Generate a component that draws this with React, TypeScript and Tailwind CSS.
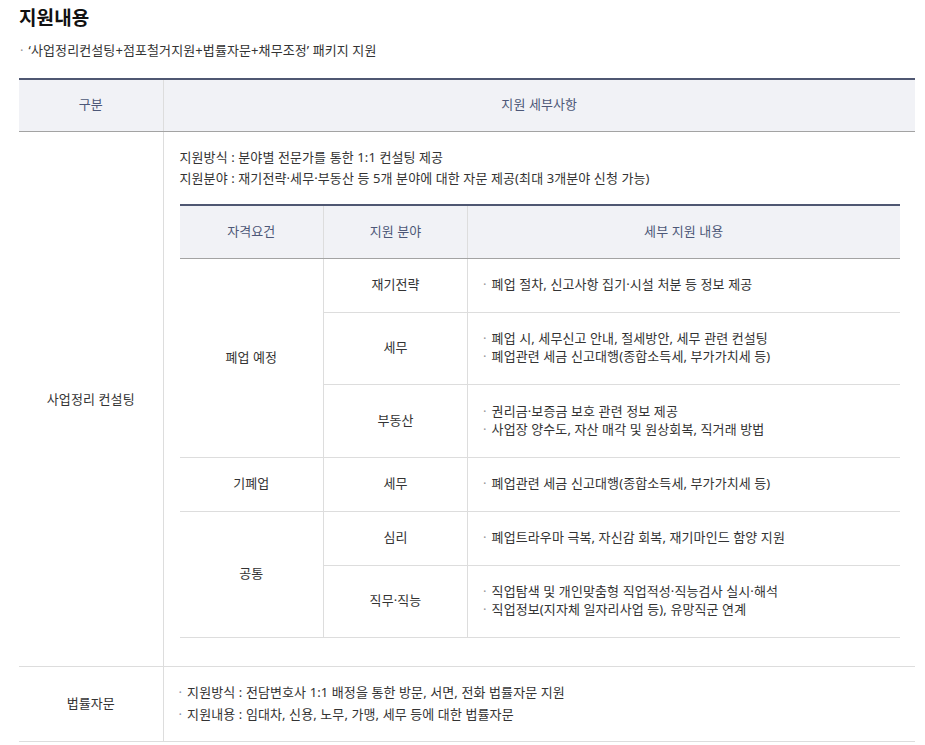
const font = { fontFamily: '"Noto Sans", "Noto Sans CJK KR", sans-serif' }

const Bullet = ({ children, dot = 'text-[#999]' }: { children: React.ReactNode; dot?: string }) => (
  <li className="flex">
    <span className={`mr-[5px] ${dot}`}>·</span>
    <span>{children}</span>
  </li>
)

type Row = { group?: string; span?: number; field: string; items: string[]; h: string }

const rows: Row[] = [
  { group: '폐업 예정', span: 3, field: '재기전략', h: 'h-[54px]', items: ['폐업 절차, 신고사항 집기·시설 처분 등 정보 제공'] },
  { field: '세무', h: 'h-[72px]', items: ['폐업 시, 세무신고 안내, 절세방안, 세무 관련 컨설팅', '폐업관련 세금 신고대행(종합소득세, 부가가치세 등)'] },
  { field: '부동산', h: 'h-[73px]', items: ['권리금·보증금 보호 관련 정보 제공', '사업장 양수도, 자산 매각 및 원상회복, 직거래 방법'] },
  { group: '기폐업', span: 1, field: '세무', h: 'h-[54px]', items: ['폐업관련 세금 신고대행(종합소득세, 부가가치세 등)'] },
  { group: '공통', span: 2, field: '심리', h: 'h-[54px]', items: ['폐업트라우마 극복, 자신감 회복, 재기마인드 함양 지원'] },
  { field: '직무·직능', h: 'h-[72px]', items: ['직업탐색 및 개인맞춤형 직업적성·직능검사 실시·해석', '직업정보(지자체 일자리사업 등), 유망직군 연계'] },
]

export default function App() {
  return (
    <div className="bg-white text-[13px] leading-[18px] tracking-[0.1px] text-[#333]" style={font}>
      <div className="pl-[19px] pt-[6px]">
        <h2 className="text-[19px] font-bold leading-[24px] text-[#111]">지원내용</h2>
        <p className="mt-[11px] flex">
          <span className="ml-[1px] mr-[5px] text-[#999]">·</span>
          ‘사업정리컨설팅+점포철거지원+법률자문+채무조정’ 패키지 지원
        </p>
      </div>

      <table className="ml-[19px] mt-[19px] w-[896px] table-fixed border-collapse">
        <colgroup>
          <col className="w-[144px]" />
          <col />
        </colgroup>
        <thead>
          <tr className="h-[52px] border-t-2 border-[#4f5772] bg-[#f1f2f6] text-[#4d5878]">
            <th className="border-b border-[#a3a3a3] pb-[2px] font-normal">구분</th>
            <th className="border-b border-l border-[#a3a3a3] border-l-[#ddd] pb-[2px] font-normal">지원 세부사항</th>
          </tr>
        </thead>
        <tbody>
          <tr className="border-b border-[#ddd]">
            <td className="text-center">사업정리 컨설팅</td>
            <td className="border-l border-[#ddd] pb-[28px] pl-[16px] pr-[16px] pt-[15px]">
              <p className="leading-[21px]">지원방식 : 분야별 전문가를 통한 1:1 컨설팅 제공</p>
              <p className="leading-[21px]">지원분야 : 재기전략·세무·부동산 등 5개 분야에 대한 자문 제공(최대 3개분야 신청 가능)</p>
              <table className="mt-[15px] w-[720px] table-fixed border-collapse">
                <colgroup>
                  <col className="w-[144px]" />
                  <col className="w-[144px]" />
                  <col />
                </colgroup>
                <thead>
                  <tr className="h-[54px] border-t-2 border-[#4f5772] bg-[#f1f2f6] text-[#4d5878]">
                    <th className="border-b border-[#a3a3a3] pb-[2px] font-normal">자격요건</th>
                    <th className="border-b border-l border-[#a3a3a3] border-l-[#ddd] pb-[2px] font-normal">지원 분야</th>
                    <th className="border-b border-l border-[#a3a3a3] border-l-[#ddd] pb-[2px] font-normal">세부 지원 내용</th>
                  </tr>
                </thead>
                <tbody>
                  {rows.map((r, i) => (
                    <tr key={i} className={`${r.h} border-b border-[#ddd]`}>
                      {r.group && (
                        <td rowSpan={r.span} className="pb-[3px] text-center">
                          {r.group}
                        </td>
                      )}
                      <td className="border-l border-[#ddd] pb-[3px] text-center">{r.field}</td>
                      <td className="border-l border-[#ddd] pb-[3px] pl-[15px]">
                        <ul>
                          {r.items.map((t) => (
                            <Bullet key={t}>{t}</Bullet>
                          ))}
                        </ul>
                      </td>
                    </tr>
                  ))}
                </tbody>
              </table>
            </td>
          </tr>
          <tr className="h-[75px] border-b border-[#ddd]">
            <td className="pb-[2px] text-center">법률자문</td>
            <td className="border-l border-[#ddd] pb-[2px] pl-[15px]">
              <ul className="space-y-[4px]">
                <Bullet dot="text-[#8a93b0]">지원방식 : 전담변호사 1:1 배정을 통한 방문, 서면, 전화 법률자문 지원</Bullet>
                <Bullet dot="text-[#8a93b0]">지원내용 : 임대차, 신용, 노무, 가맹, 세무 등에 대한 법률자문</Bullet>
              </ul>
            </td>
          </tr>
        </tbody>
      </table>
    </div>
  )
}
